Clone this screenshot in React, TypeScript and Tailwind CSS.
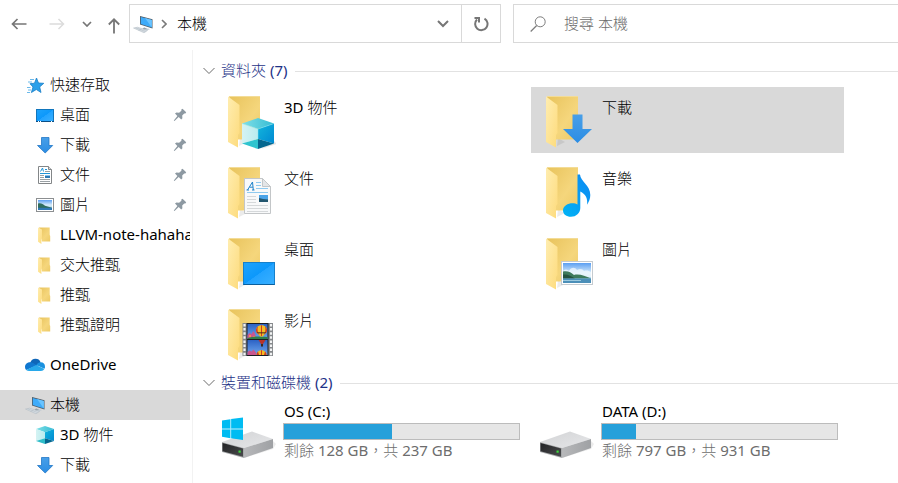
import type { ReactNode } from "react";

type IconProps = { children: ReactNode };

function SmallIcon({ children }: IconProps) {
  return (
    <svg viewBox="0 0 20 20" className="size-5 shrink-0" aria-hidden="true">
      {children}
    </svg>
  );
}

function Gradients() {
  return (
    <svg width="0" height="0" className="absolute" aria-hidden="true">
      <defs>
        <linearGradient id="folderBack" x1="0" y1="0" x2="1" y2="1">
          <stop offset="0" stopColor="#e8c35c" />
          <stop offset="0.6" stopColor="#f5d67c" />
          <stop offset="1" stopColor="#edca66" />
        </linearGradient>
        <linearGradient id="folderFlap" x1="0" y1="0" x2="1" y2="1">
          <stop offset="0" stopColor="#ffedb0" />
          <stop offset="1" stopColor="#fddb7c" />
        </linearGradient>
        <linearGradient id="screen" x1="0" y1="0" x2="1" y2="1">
          <stop offset="0" stopColor="#1fa4fb" />
          <stop offset="0.5" stopColor="#0c98fb" />
          <stop offset="0.51" stopColor="#22a3ff" />
          <stop offset="1" stopColor="#39b0ff" />
        </linearGradient>
        <linearGradient id="arrowBlue" x1="0" y1="0" x2="0" y2="1">
          <stop offset="0" stopColor="#489fe8" />
          <stop offset="1" stopColor="#2b8de4" />
        </linearGradient>
        <linearGradient id="cubeTop" x1="0" y1="0" x2="1" y2="0">
          <stop offset="0" stopColor="#7fdfe6" />
          <stop offset="1" stopColor="#35bcd4" />
        </linearGradient>
        <linearGradient id="cubeLeft" x1="0" y1="0" x2="1" y2="0">
          <stop offset="0" stopColor="#d5f3f3" />
          <stop offset="1" stopColor="#b9ecef" />
        </linearGradient>
        <linearGradient id="cubeRight" x1="0" y1="0" x2="1" y2="1">
          <stop offset="0" stopColor="#13b6dc" />
          <stop offset="1" stopColor="#0089d2" />
        </linearGradient>
        <linearGradient id="sky" x1="0" y1="0" x2="0" y2="1">
          <stop offset="0" stopColor="#5b9ff2" />
          <stop offset="0.5" stopColor="#d8ecfa" />
          <stop offset="1" stopColor="#8fc5dc" />
        </linearGradient>
        <linearGradient id="note" x1="0" y1="1" x2="1" y2="0">
          <stop offset="0" stopColor="#00b4f5" />
          <stop offset="1" stopColor="#0d87f2" />
        </linearGradient>
        <linearGradient id="driveTop" x1="0" y1="0" x2="1" y2="1">
          <stop offset="0" stopColor="#d2d3d5" />
          <stop offset="1" stopColor="#e6e7e9" />
        </linearGradient>
        <linearGradient id="driveSide" x1="0" y1="0" x2="1" y2="0">
          <stop offset="0" stopColor="#b7b8ba" />
          <stop offset="1" stopColor="#9fa1a4" />
        </linearGradient>
        <linearGradient id="driveFront" x1="0" y1="0" x2="1" y2="1">
          <stop offset="0" stopColor="#222325" />
          <stop offset="1" stopColor="#4a4b4d" />
        </linearGradient>
        <linearGradient id="filmSky" x1="0" y1="0" x2="0" y2="1">
          <stop offset="0" stopColor="#2c62c4" />
          <stop offset="1" stopColor="#6fa7ee" />
        </linearGradient>
      </defs>
    </svg>
  );
}

const star = (
  <SmallIcon>
    <path d="M11.500 3l2 5 5.300.3-4.100 3.600 1.300 5.600-4.700-3-4.900 3 1.600-5.500-3-3.300 4.500-.5z" fill="#2ba0ea" stroke="#1c7fc6" strokeWidth=".8" />
    <path d="M5 4.500h4M3 7h4M2 12.500h3.500M3 15h3M2 17.500h3" stroke="#6bb9ea" strokeWidth="1" />
  </SmallIcon>
);

const desktop = (
  <SmallIcon>
    <rect x="1.500" y="4.500" width="17" height="12" fill="url(#screen)" stroke="#1176bd" />
    <path d="M1 16.500h18" stroke="#0b4f86" />
    <path d="M3 16.500h1M5 16.500h1M16 16.500h1" stroke="#fff" />
  </SmallIcon>
);

const download = (
  <SmallIcon>
    <path d="M6.500 2.500h7.500v8h3.700L10.200 18 2.500 10.500h4z" fill="url(#arrowBlue)" stroke="#2277c7" strokeWidth=".8" />
  </SmallIcon>
);

const documentIcon = (
  <SmallIcon>
    <path d="M3.500 1.500h10l3 3v14h-13z" fill="#fff" stroke="#838688" />
    <path d="M13.500 1.500v3h3" fill="#d9dcde" stroke="#838688" />
    <path d="M5.500 6.500l2-3.500 1 3.500M10 4.500h2M5 8.500h10" stroke="#2094d8" fill="none" />
    <path d="M10 6.500h5M5 10.500h4M5 12.500h4M5 14.500h10M5 16.500h10" stroke="#9aa0a4" />
    <rect x="10" y="10" width="5" height="3" fill="#2d78b4" />
    <rect x="10" y="10" width="5" height="1" fill="#86c3f0" />
  </SmallIcon>
);

const picture = (
  <SmallIcon>
    <rect x="1.500" y="3.500" width="17" height="13" fill="#fff" stroke="#8c8f91" />
    <rect x="3" y="5" width="14" height="10" fill="url(#sky)" />
    <path d="M3 8.500c3-.7 5 .5 7 2.200l7 2V13H3z" fill="#2f6d5e" />
    <path d="M3 12.800h14V15H3z" fill="#2f78b5" />
  </SmallIcon>
);

const folderSmall = (
  <SmallIcon>
    <path d="M4 2.500h10.700V10l.5 1v5.500H7z" fill="url(#folderBack)" />
    <path d="M3 2.500l4 2v9l-.6.700V19L3 16.800z" fill="url(#folderFlap)" />
  </SmallIcon>
);

const oneDrive = (
  <SmallIcon>
    <path d="M5.300 7.500A5.500 5.500 0 0 1 15.600 7.200L12 11 6 9z" fill="#0f66b8" />
    <path d="M5.300 7.300c-3 0-5.300 2-5.300 4.600 0 1.200.4 2.200 1.100 3L12 10.400 8.500 8.200a6 6 0 0 0-3.200-.9z" fill="#1077d0" />
    <path d="M15.600 7.200a4.600 4.600 0 0 1 4.400 4.500c0 .8-.2 1.500-.6 2.100L11.300 10l1.500-1.800a4.500 4.500 0 0 1 2.800-1z" fill="#1a91df" />
    <path d="M1.100 14.900l10-4.900 8.300 3.900A4.200 4.200 0 0 1 16 16H4.700a4.700 4.700 0 0 1-3.600-1.100z" fill="#28a8ea" />
  </SmallIcon>
);

const computer = (
  <SmallIcon>
    <path d="M11 13.500l3 1-1.500 1.200-3.500-.3z" fill="#7f8b94" />
    <path d="M8.500 14.800l5.500 1.500 3-1-2-.8z" fill="#c3ccd3" />
    <path d="M7 2l12.500 3.200v9.300L7 10.500z" fill="#4e5b66" />
    <path d="M7.800 3l11 2.900v7.500l-11-3.500z" fill="#3eabfa" />
    <path d="M12 4.100l6.800 1.800v7.500z" fill="#6ac4ff" />
    <path d="M.5 14l4.200-.8 9.800 3.300-3.500 2.300z" fill="#d5dce2" stroke="#aeb8c0" strokeWidth=".5" />
    <path d="M2.700 13.800l9.800 3.700M5.500 16.500l3-1.200" stroke="#aeb8c0" strokeWidth=".5" />
  </SmallIcon>
);

const cubeSmall = (
  <SmallIcon>
    <path d="M10 1l9 3-9 3.300L1 4z" fill="url(#cubeTop)" />
    <path d="M1 4l9 3.300v5.900L1 16z" fill="url(#cubeLeft)" />
    <path d="M10 7.300L19 4v12l-9-2.800z" fill="url(#cubeRight)" />
    <path d="M1 16l9-2.800V19z" fill="#2fbdc9" />
    <path d="M10 13.200l9 2.800-9 3z" fill="#04678f" />
  </SmallIcon>
);

function Pin() {
  return (
    <svg viewBox="0 0 14 14" className="mr-[3px] ml-auto size-3.5 shrink-0" aria-hidden="true">
      <path d="M9.500.8l3.700 3.500-.8 1.200-1.200-.1-2 2.100.2 2.700-1.200 1.400-2.500-2.500L1.500 13 .8 12.400l3.600-4.300L2 5.600l1.400-1 2.700.2 2.300-2-.1-1.200z" fill="#8d99a2" />
    </svg>
  );
}

type NavItem = { label: string; icon: ReactNode; child?: boolean; pinned?: boolean; selected?: boolean };

const navGroups: NavItem[][] = [
  [
    { label: "快速存取", icon: star },
    { label: "桌面", icon: desktop, child: true, pinned: true },
    { label: "下載", icon: download, child: true, pinned: true },
    { label: "文件", icon: documentIcon, child: true, pinned: true },
    { label: "圖片", icon: picture, child: true, pinned: true },
    { label: "LLVM-note-hahaha", icon: folderSmall, child: true },
    { label: "交大推甄", icon: folderSmall, child: true },
    { label: "推甄", icon: folderSmall, child: true },
    { label: "推甄證明", icon: folderSmall, child: true },
  ],
  [{ label: "OneDrive", icon: oneDrive }],
  [
    { label: "本機", icon: computer, selected: true },
    { label: "3D 物件", icon: cubeSmall, child: true },
    { label: "下載", icon: download, child: true },
  ],
];

function FolderIcon({ children }: IconProps) {
  return (
    <svg viewBox="0 0 48 56" className="h-14 w-12 shrink-0" aria-hidden="true">
      <path d="M11 51l8-4-7-4z" fill="#000" opacity=".08" />
      <path d="M1 1.500h31v43H10z" fill="url(#folderBack)" />
      <path d="M0 1.500l11.500 8.500V38l-1.500 2v12.500L0 47z" fill="url(#folderFlap)" />
      <path d="M1 1.500h31" stroke="#f3dc97" />
      {children}
    </svg>
  );
}

const cubeArt = (
  <>
    <path d="M46 46l3 3-16 5z" fill="#000" opacity=".1" />
    <path d="M30 23l16 5.500L30 34l-16-5.500z" fill="url(#cubeTop)" />
    <path d="M14 28.500L30 34v10l-16 4.500z" fill="url(#cubeLeft)" />
    <path d="M30 34l16-5.500v20L30 44z" fill="url(#cubeRight)" />
    <path d="M14 48.500L30 44v10z" fill="#2fc4cf" />
    <path d="M30 44l16 4.500L30 54z" fill="#04678f" />
    <path d="M14 28.500L30 34l16-5.500M30 34v10" stroke="#8be6ee" strokeWidth=".5" fill="none" />
  </>
);

const downloadArt = <path d="M26.500 19.500h10V34H46L31.500 48 17 34h9.500z" fill="url(#arrowBlue)" />;

const documentArt = (
  <>
    <path d="M16.500 12.500h18l8 8V47.500h-26z" fill="#f8f9fa" stroke="#c3c6c8" />
    <path d="M34.500 12.500v8h8z" fill="#e3e5e7" stroke="#c3c6c8" />
    <path d="M19.500 24l5-8 .8 8M18.500 24h2.500M24 24h2.500M21.500 21.200h3.400" stroke="#1d83cc" fill="none" />
    <path d="M28 16.500h5M28 19.500h5M28 22.500h12M19 26.500h21" stroke="#8fcaf0" />
    <path d="M19 30.500h9M19 33.500h9M19 36.500h9M19 39.500h21M19 42.500h21M19 45.500h21" stroke="#d5d8da" />
    <rect x="31" y="29" width="9" height="7" fill="#4aa3e8" />
    <path d="M31 32l4 1 5 .5V36h-9z" fill="#22566f" />
  </>
);

const musicArt = (
  <path d="M31.500 8.500h2.500c.5 7 10.300 10.500 10.300 20.500 0 4-1.400 7-3.300 9.700 1-6.700-1.700-10.700-6.700-13.200V42c0 5-4.300 8.800-9.300 8.800-4.600 0-8-2.500-8-6.300 0-4.500 4.800-7.200 9.500-7.200 2 0 3.700.4 5 1.200z" fill="url(#note)" />
);

const desktopArt = (
  <>
    <rect x="15.500" y="25.500" width="31" height="22" fill="url(#screen)" stroke="#1680cb" />
    <path d="M15.500 47.500h31" stroke="#0b5f9d" />
  </>
);

const pictureArt = (
  <>
    <rect x="15.500" y="24.500" width="31" height="23" fill="#fff" stroke="#c5cbd0" />
    <rect x="17" y="26" width="28" height="20" fill="url(#sky)" />
    <path d="M17 34c2-2 4-2 6 0 2-4 6-4 8-1 3-2 6-1 7 1 3-1 5 0 7 1v5H17z" fill="#eef6fc" opacity=".8" />
    <path d="M17 34.500c5-1 8 1 11 3.500 5-1.500 11 1 17 3.500H17z" fill="#3e7a5c" />
    <path d="M17 37.500c5-.5 8 1.500 12 4H17z" fill="#24523f" />
    <path d="M17 41.500h28V46H17z" fill="#4c8fb8" />
    <path d="M17 43.500h18" stroke="#9cc9de" />
  </>
);

const balloonStripes = (
  <>
    <path d="M28 22.500c0-7 11-7 11 0 0 3-3 3.500-4 6h-3c-1-2.500-4-3-4-6z" fill="#f4bd22" />
    <path d="M30 18.500c-1 3-.5 6 2 9.500-1-2-4-3-4-5.500 0-1.700.8-3 2-4zM37 18.500c1 3 .5 6-2 9.500 1-2 4-3 4-5.500 0-1.700-.8-3-2-4zM33 17.300h1v10.700h-1z" fill="#cf3a26" />
    <path d="M28.500 24h10l-1.500 1.500h-7z" fill="#4b3020" opacity=".7" />
  </>
);

const videoArt = (
  <>
    <rect x="14.500" y="15" width="30.500" height="33" fill="#85888b" />
    <rect x="18.500" y="15" width="22" height="33" fill="#1b1d22" />
    <rect x="19.500" y="16" width="20" height="15" fill="url(#filmSky)" />
    <rect x="19.500" y="32" width="20" height="15" fill="url(#filmSky)" />
    <path d="M19.500 27l2-2 2 1 2-3 2 4v4h-8z" fill="#c9568f" />
    <path d="M21 27h2v2h-2zM25 28h2v2h-2z" fill="#f08c5a" />
    <path d="M19.500 30c7-1.500 10-2 20-1v2h-20z" fill="#2f7d48" />
    {balloonStripes}
    <path d="M30.500 32h7l-2.500 4h-2z" fill="#b7332a" />
    <path d="M33 36h2v2.500h-2z" fill="#40281a" />
    <path d="M19.500 44l2-1.500 2 1 2-2 2.500 3V47h-8.500z" fill="#c9568f" />
    <path d="M28.500 47c0-6.500 10-6.500 10 0z" fill="#f4bd22" />
    <path d="M30 43.500L31 47h-2.500c0-1.500.5-2.700 1.500-3.500zM37 43.500L36 47h2.500c0-1.500-.5-2.700-1.500-3.500zM33 42.200h1V47h-1z" fill="#cf3a26" />
    <path d="M16.500 16v32M43 16v32" stroke="#f2f3f4" strokeWidth="2.200" strokeDasharray="2.500 1.600" />
  </>
);

const folders: { label: string; art: ReactNode; selected?: boolean }[] = [
  { label: "3D 物件", art: cubeArt },
  { label: "下載", art: downloadArt, selected: true },
  { label: "文件", art: documentArt },
  { label: "音樂", art: musicArt },
  { label: "桌面", art: desktopArt },
  { label: "圖片", art: pictureArt },
  { label: "影片", art: videoArt },
];

const drives = [
  { label: "OS (C:)", free: 128, total: 237, system: true },
  { label: "DATA (D:)", free: 797, total: 931, system: false },
];

function DriveIcon({ system }: { system: boolean }) {
  return (
    <svg viewBox="0 0 56 44" className="mt-3.5 mr-1.5 h-11 w-14 shrink-0" aria-hidden="true">
      <path d="M23 43l29-9 3-5-3-3z" fill="#000" opacity=".08" />
      <path d="M1 27l30-10.500L52 24 23 33z" fill="url(#driveTop)" />
      <path d="M23 33l29-9v9L23 43z" fill="url(#driveSide)" />
      <path d="M1 27l22 6v10L1 37z" fill="#a7a9ab" />
      <path d="M1.500 28l20.500 5.500v8.300L1.500 36.200z" fill="url(#driveFront)" />
      <rect x="17.500" y="35.500" width="2.200" height="2.200" fill="#3ddb3d" />
      {system && (
        <>
          <path d="M1 5.500l8.500-1.300v9.500H1zM10 4.100L22 2.500v11.200H10zM1 14.200h8.500v9L1 21.800zM10 14.200h12V25l-12-1.700z" fill="#00bcf2" />
          <path d="M1 14h21M9.800 4v19.500" stroke="#a4e6fb" strokeWidth=".7" />
        </>
      )}
    </svg>
  );
}

function SectionTitle({ children }: IconProps) {
  return (
    <h2 className="flex h-8 items-center text-[#1e3287]">
      <button type="button" className="flex items-center gap-1.5">
        <svg viewBox="0 0 12 8" className="h-2 w-3" fill="none" stroke="#6b6b6b" aria-hidden="true">
          <path d="M.5 1l5.500 5.500L11.500 1" />
        </svg>
        <span className="pb-0.5">{children}</span>
      </button>
      <span className="ml-2 h-px flex-1 bg-[#e2e2e2]" />
    </h2>
  );
}

function Toolbar() {
  return (
    <header className="flex pt-1">
      <nav aria-label="瀏覽" className="flex h-[39px] shrink-0 text-[#767676]">
        <button type="button" aria-label="上一頁" className="grid w-[38px] place-items-center">
          <svg viewBox="0 0 16 12" className="h-3 w-4" fill="none" stroke="currentColor" strokeWidth="1.700">
            <path d="M15.500 6H1.500M6.500 1l-5 5 5 5" />
          </svg>
        </button>
        <button type="button" aria-label="下一頁" disabled className="grid w-[38px] place-items-center text-[#dcdcdc]">
          <svg viewBox="0 0 16 12" className="h-3 w-4" fill="none" stroke="currentColor" strokeWidth="1.500">
            <path d="M.5 6h14M9.500 1l5 5-5 5" />
          </svg>
        </button>
        <button type="button" aria-label="最近的位置" className="grid w-[22px] place-items-center">
          <svg viewBox="0 0 10 6" className="h-1.5 w-2.5" fill="none" stroke="currentColor" strokeWidth="1.700">
            <path d="M1 1l4 4 4-4" />
          </svg>
        </button>
        <button type="button" aria-label="上一層" className="grid w-[31px] place-items-center">
          <svg viewBox="0 0 12 16" className="mt-1 h-4 w-3" fill="none" stroke="currentColor" strokeWidth="1.800">
            <path d="M6 15.500V1.500M.8 6.500L6 1.300l5.200 5.200" />
          </svg>
        </button>
      </nav>
      <div className="flex h-[39px] min-w-0 flex-1 items-center border border-[#d9d9d9] pl-[3px]">
        {computer}
        <svg viewBox="0 0 6 10" className="ml-2 h-2.5 w-1.5" fill="none" stroke="#7a7a7a" strokeWidth="1.600" aria-hidden="true">
          <path d="M1 1l4 4-4 4" />
        </svg>
        <button type="button" className="ml-2.5 pb-0.5">本機</button>
        <button type="button" aria-label="顯示歷程" className="ml-auto grid h-full w-9 place-items-center text-[#767676]">
          <svg viewBox="0 0 12 8" className="h-2 w-3" fill="none" stroke="currentColor" strokeWidth="2">
            <path d="M1 1l5 5 5-5" />
          </svg>
        </button>
        <button type="button" aria-label="重新整理" className="grid h-full w-[39px] place-items-center border-l border-[#d9d9d9] text-[#767676]">
          <svg viewBox="0 0 16 16" className="size-4" fill="none" stroke="currentColor" strokeWidth="2">
            <path d="M11.500 2.600A6.200 6.200 0 1 1 4 3.500M1.500 2H6v4.500" />
          </svg>
        </button>
      </div>
      <label className="ml-3 flex h-[39px] w-[385px] shrink-0 items-center border border-r-0 border-[#d9d9d9] pl-4">
        <svg viewBox="0 0 16 16" className="size-4 shrink-0" fill="none" stroke="#7d7d7d" aria-hidden="true">
          <circle cx="10.200" cy="5.800" r="5" />
          <path d="M6.700 9.500L.7 15.500" strokeWidth="1.200" />
        </svg>
        <input type="search" aria-label="搜尋 本機" placeholder="搜尋 本機" className="ml-[18px] min-w-0 flex-1 pb-0.5 outline-none placeholder:text-[#6d6d6d]" />
      </label>
    </header>
  );
}

function Sidebar() {
  return (
    <nav aria-label="導覽窗格" className="flex w-[193px] shrink-0 flex-col gap-2.5 border-r border-[#f2f2f2] pt-5 pr-0.5">
      {navGroups.map((group, g) => (
        <ul key={g}>
          {group.map((item) => (
            <li key={item.label}>
              <button
                type="button"
                className={`flex h-[30px] w-full items-center gap-[5px] overflow-hidden text-left whitespace-nowrap ${item.child ? "pl-[35px]" : "pl-[25px]"} ${item.selected ? "bg-[#d9d9d9]" : ""}`}
              >
                {item.icon}
                <span className="pb-0.5">{item.label}</span>
                {item.pinned && <Pin />}
              </button>
            </li>
          ))}
        </ul>
      ))}
    </nav>
  );
}

export default function App() {
  return (
    <div
      lang="zh-Hant"
      className="flex min-h-screen flex-col overflow-hidden bg-white font-['Noto_Sans','Noto_Sans_CJK_TC_Light','Noto_Sans_CJK_TC_DemiLight','Noto_Sans_CJK_TC',sans-serif] text-[15px] leading-[22px] text-black"
    >
      <Gradients />
      <Toolbar />
      <div className="mt-[7px] flex h-0 min-h-[433px] flex-1">
        <Sidebar />
        <main className="min-w-0 flex-1 pt-[5px]">
          <section className="pl-2.5">
            <SectionTitle>資料夾 (7)</SectionTitle>
            <div className="grid grid-cols-[repeat(auto-fill,313px)] gap-[5px] pl-2.5">
              {folders.map((folder) => (
                <button
                  key={folder.label}
                  type="button"
                  className={`flex h-[66px] items-start gap-2 pt-2 pl-[15px] text-left leading-6 ${folder.selected ? "bg-[#d9d9d9]" : ""}`}
                >
                  <FolderIcon>{folder.art}</FolderIcon>
                  {folder.label}
                </button>
              ))}
            </div>
          </section>
          <section className="pt-px pl-2.5">
            <SectionTitle>裝置和磁碟機 (2)</SectionTitle>
            <div className="grid grid-cols-[repeat(auto-fill,313px)] gap-[5px] pl-2.5">
              {drives.map((drive) => (
                <button key={drive.label} type="button" className="flex items-start pt-0.5 pr-1.5 pl-2 text-left leading-5">
                  <DriveIcon system={drive.system} />
                  <span className="flex flex-1 flex-col">
                    <span className="pb-0.5 pl-px">{drive.label}</span>
                    <span className="flex h-[17px] border border-[#bcbcbc] bg-[#e6e6e6]">
                      <span className="bg-[#26a0da]" style={{ width: `${(1 - drive.free / drive.total) * 100}%` }} />
                    </span>
                    <span className="pl-px text-[#6d6d6d]">
                      剩餘 {drive.free} GB，共 {drive.total} GB
                    </span>
                  </span>
                </button>
              ))}
            </div>
          </section>
        </main>
      </div>
    </div>
  );
}
